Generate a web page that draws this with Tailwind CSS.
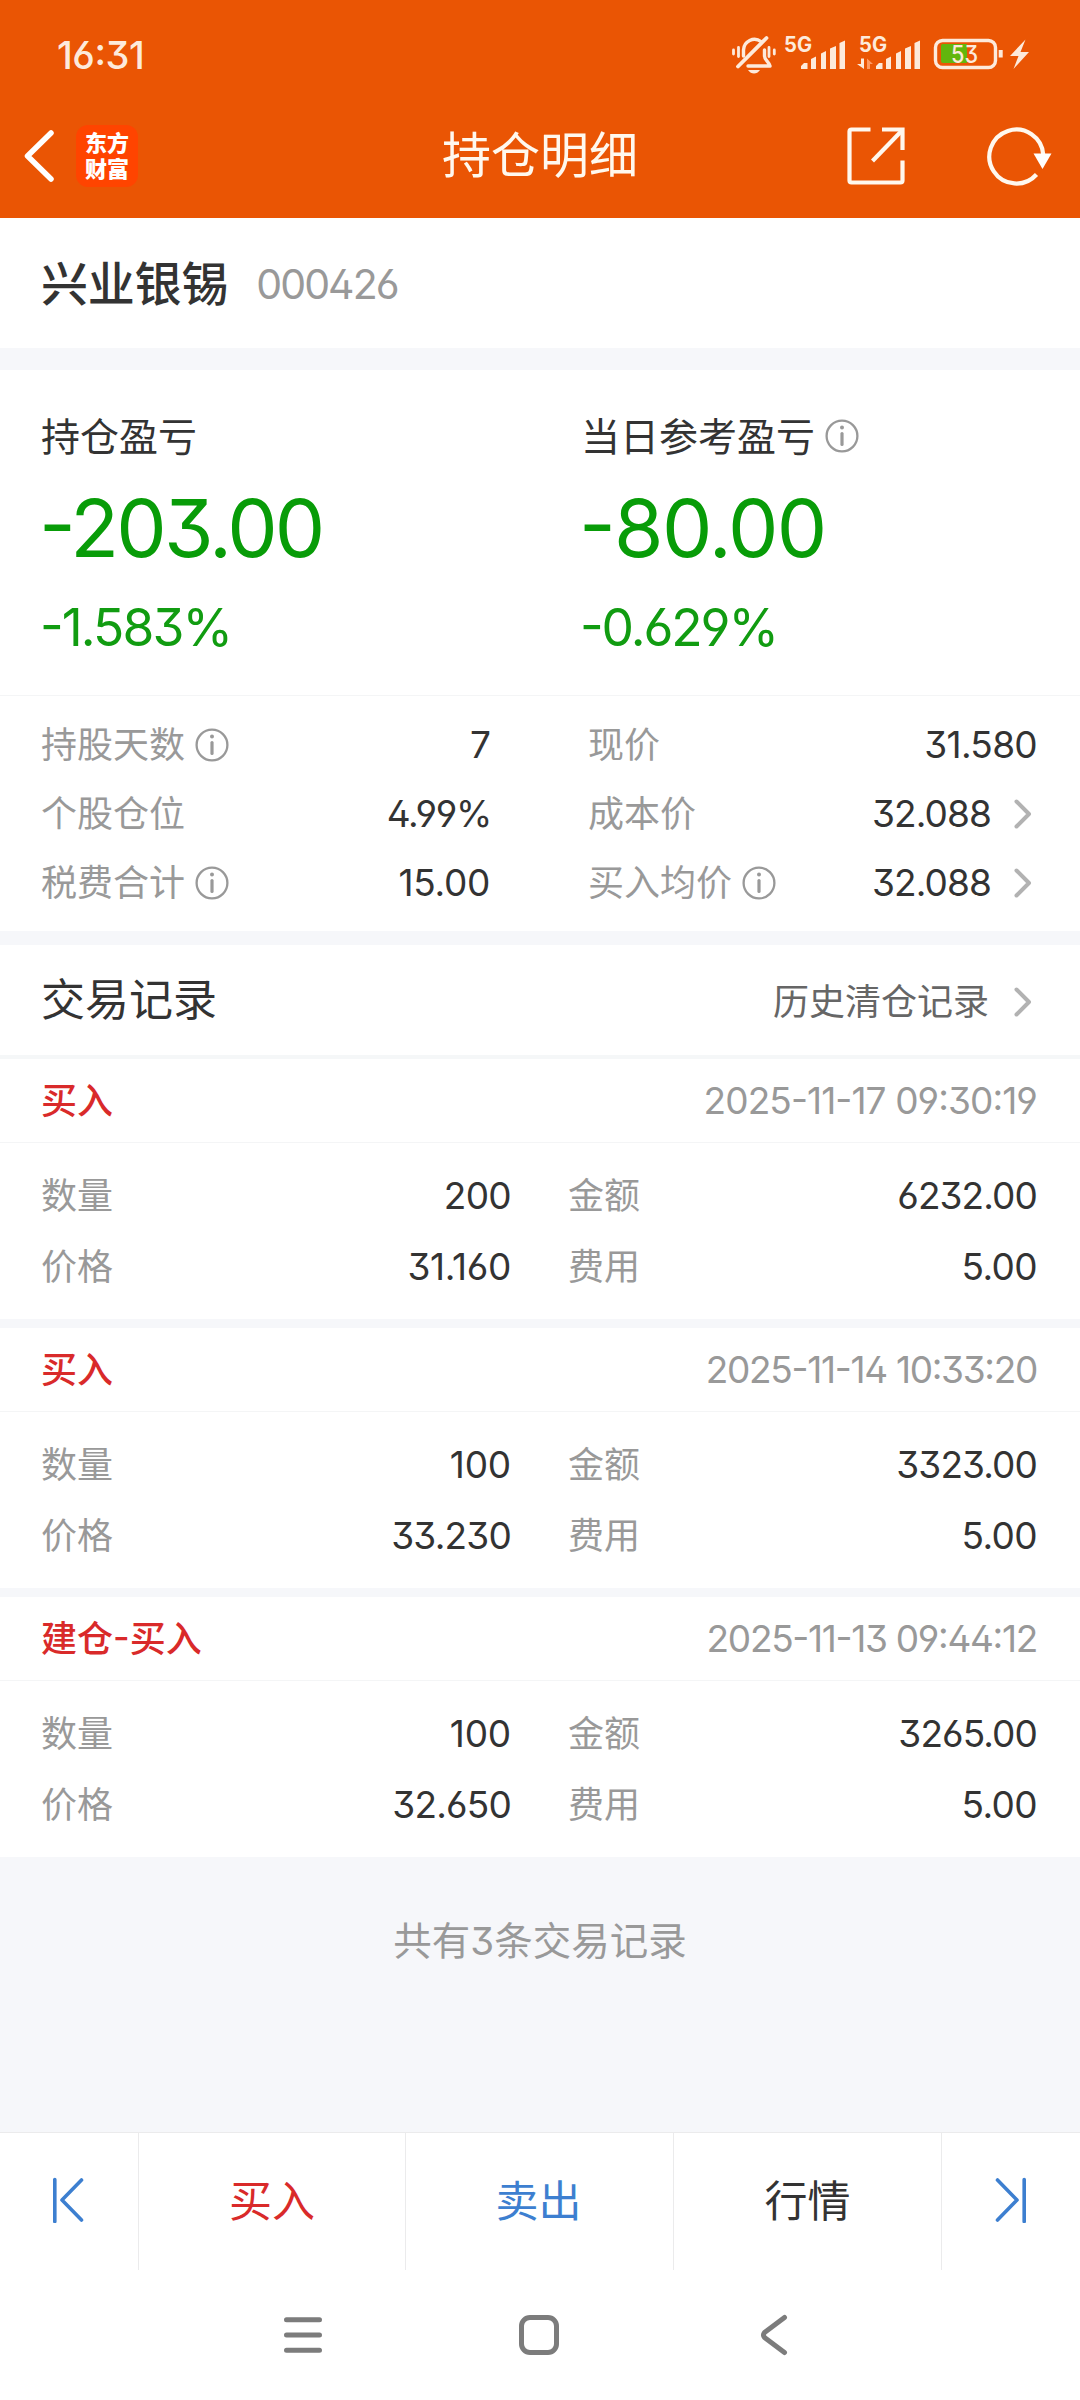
<!DOCTYPE html>
<html lang="zh-CN">
<head>
<meta charset="utf-8">
<meta name="viewport" content="width=1080">
<title>持仓明细</title>
<script src="https://cdn.jsdelivr.net/npm/@tailwindcss/browser@4"></script>
</head>
<body class="bg-[#f6f7fa]">
<div class="flex h-[2400px] w-[1080px] flex-col overflow-hidden bg-[#f6f7fa] font-[Inter,'Noto_Sans_CJK_SC',sans-serif] text-[36px] leading-none text-[#333] [font-feature-settings:'ss01','cv09','case']">

  <!-- Header -->
  <header class="h-[218px] shrink-0 bg-[#ea5504] text-[#fff8ee]">
    <div class="flex h-[108px] items-center pl-[57px] pr-[50px] text-[#fdeadb]">
      <span class="pt-px text-[38px] font-[500] tracking-[-0.4px]">16:31</span>
      <svg class="ml-auto h-[50px] w-[300px]" viewBox="730 29 300 50" fill="none" stroke="currentColor">
        <g stroke-width="3.4" stroke-linecap="round" stroke-linejoin="round">
          <path d="M743.5 56V50A11 11 0 0 1 761 41.5M764.5 50v6c0 4 4 5 5.500 10H748" />
          <path d="M738 66.500 L766.500 38" stroke-width="3.800"/>
          <path d="M733.500 50v4M738.500 47.500v9M769 47.500v9M774.300 50v4" stroke-width="2.800"/>
        </g>
        <path d="M748 70h12q-2.500 3.500-6 3.500t-6-3.500z" fill="currentColor" stroke="none"/>
        <g fill="currentColor" stroke="none">
          <text class="font-bold" x="784" y="52" font-size="21" textLength="28" lengthAdjust="spacingAndGlyphs">5G</text>
          <path d="M801 69v-3l3-3h3.500v6zM811 69V59l5-2.500V69zM821 69V53.500l5-2.500V69zM830 69V48.500l6-2.500V69zM839.500 69V43l5.500-2.500V69z"/>
          <text class="font-bold" x="859" y="52" font-size="21" textLength="28" lengthAdjust="spacingAndGlyphs">5G</text>
          <path d="M876 69v-3l3-3h3.500v6zM886 69V59l5-2.500V69zM896 69V53.500l5-2.500V69zM905 69V48.500l6-2.500V69zM914.500 69V43l5.500-2.500V69z"/>
          <path d="M861 58.500h3V69l-7-5h4z"/>
          <path d="M867 69V58.500l6 5.500h-3v5z" fill="#ff9a62"/>
        </g>
        <rect x="935.500" y="40.500" width="60" height="27" rx="7" stroke-width="3.400"/>
        <path d="M1000.700 50v7.500" stroke-width="4"/>
        <path d="M943 44h24v19h-24q-2 0-2-2V46q0-2 2-2z" fill="#62b60d" stroke="none"/>
        <text class="font-medium" x="951" y="63" font-size="24" textLength="27" lengthAdjust="spacingAndGlyphs" fill="currentColor" stroke="none">53</text>
        <path d="M1025.500 39.500 1010 56h8.500L1013.500 69 1029 52h-8.500z" fill="currentColor" stroke="none"/>
      </svg>
    </div>
    <div class="grid h-[95px] grid-cols-3 items-center">
      <div class="flex items-center gap-[20px] pl-[24px]">
        <svg class="h-[52px] w-[32px]" viewBox="0 0 32 52" fill="none" stroke="#fff" stroke-width="5.500" stroke-linecap="round" stroke-linejoin="round"><path d="M27 3 3.500 26 27 49"/></svg>
        <div class="grid size-[62px] place-content-center rounded-[12px] bg-[#ff4400] text-center text-[22px] leading-[26px] font-black text-white">东方<br>财富</div>
      </div>
      <h1 class="text-center text-[49px] font-normal whitespace-nowrap">持仓明细</h1>
      <div class="flex items-center justify-end gap-[79px] pr-[27px]">
        <svg class="h-[60px] w-[60px]" viewBox="0 0 60 60" fill="none" stroke="currentColor" stroke-width="4.200" stroke-linejoin="round"><path d="M24.500 3.500H5.500q-2 0-2 2v49q0 2 2 2h49q2 0 2-2V34.500"/><path d="M36 3.500h20.500V24" stroke-linejoin="miter"/><path d="M26.500 35 56 4.500"/></svg>
        <svg class="h-[60px] w-[68px]" viewBox="1 0 68 60" fill="none" stroke="currentColor" stroke-width="4.200"><path d="M52.500 48.500A27 27 0 1 1 59.300 29"/><path d="M49.500 27.500h18L58.500 43z" fill="#fff" stroke="none"/></svg>
      </div>
    </div>
  </header>

  <!-- Stock -->
  <section class="flex h-[130px] shrink-0 items-center gap-[28px] bg-white px-[41px]">
    <span class="text-[47px] font-[450] tracking-[-0.200px]">兴业银锡</span>
    <span class="pt-[2px] text-[41px] tracking-[-1.900px] text-[#999]">000426</span>
  </section>

  <!-- Profit and loss -->
  <section class="mt-[22px] grid h-[325px] shrink-0 grid-cols-2 bg-white px-[41px] pt-[40px]">
    <div>
      <div class="flex h-[52px] items-center text-[39px]">持仓盈亏</div>
      <div class="mt-[26px] flex h-[80px] items-center text-[80px] tracking-[-2.800px] text-[#089c08] -ml-[2px]">-203.00</div>
      <div class="mt-[34px] flex h-[52px] items-center text-[51.500px] tracking-[-1.900px] text-[#119c11] -ml-px">-1.583%</div>
    </div>
    <div class="pl-[41px]">
      <div class="flex h-[52px] items-center gap-[10px] text-[39px]">当日参考盈亏
        <svg class="size-[34px] text-[#999]" viewBox="0 0 34 34" fill="none" stroke="currentColor"><circle cx="17" cy="17" r="15.400" stroke-width="2.300"/><circle cx="17" cy="8.500" r="2" fill="currentColor" stroke="none"/><path d="M17 14.500v11" stroke-width="3.200" stroke-linecap="round"/></svg>
      </div>
      <div class="mt-[26px] flex h-[80px] items-center text-[80px] tracking-[-1.700px] text-[#089c08] -ml-[2px]">-80.00</div>
      <div class="mt-[34px] flex h-[52px] items-center text-[51.500px] tracking-[-2.100px] text-[#119c11] -ml-px">-0.629%</div>
    </div>
  </section>

  <!-- Position figures -->
  <section class="grid h-[236px] shrink-0 grid-cols-[450px_449px] justify-between border-t border-[#f4f5f6] bg-white pr-[43px] pl-[41px] pt-[14px]">
    <div>
      <div class="flex h-[69px] items-center gap-[10px] text-[#999]"><span>持股天数</span>
        <svg class="size-[34px]" viewBox="0 0 34 34" fill="none" stroke="currentColor"><circle cx="17" cy="17" r="15.400" stroke-width="2.300"/><circle cx="17" cy="8.500" r="2" fill="currentColor" stroke="none"/><path d="M17 14.500v11" stroke-width="3.200" stroke-linecap="round"/></svg>
        <span class="ml-auto text-[37px] text-[#333]">7</span></div>
      <div class="flex h-[69px] items-center gap-[10px] text-[#999]"><span>个股仓位</span><span class="ml-auto text-[37px] tracking-[-1.300px] text-[#333]">4.99%</span></div>
      <div class="flex h-[69px] items-center gap-[10px] text-[#999]"><span>税费合计</span>
        <svg class="size-[34px]" viewBox="0 0 34 34" fill="none" stroke="currentColor"><circle cx="17" cy="17" r="15.400" stroke-width="2.300"/><circle cx="17" cy="8.500" r="2" fill="currentColor" stroke="none"/><path d="M17 14.500v11" stroke-width="3.200" stroke-linecap="round"/></svg>
        <span class="ml-auto pr-px text-[37px] tracking-[-0.300px] text-[#333]">15.00</span></div>
    </div>
    <div>
      <div class="flex h-[69px] items-center text-[#999]"><span>现价</span><span class="ml-auto text-[37px] tracking-[-0.700px] text-[#333]">31.580</span></div>
      <div class="flex h-[69px] items-center text-[#999]"><span>成本价</span><span class="ml-auto text-[37px] tracking-[-0.900px] text-[#333]">32.088</span>
        <svg class="mr-[4px] ml-[22px] h-[32px] w-[20px]" viewBox="0 0 20 32" fill="none" stroke="#b2b2b2" stroke-width="4" stroke-linecap="round" stroke-linejoin="round"><path d="M3.500 3.500 16 16 3.500 28.500"/></svg></div>
      <div class="flex h-[69px] items-center text-[#999]"><span>买入均价</span>
        <svg class="ml-[10px] size-[34px]" viewBox="0 0 34 34" fill="none" stroke="currentColor"><circle cx="17" cy="17" r="15.400" stroke-width="2.300"/><circle cx="17" cy="8.500" r="2" fill="currentColor" stroke="none"/><path d="M17 14.500v11" stroke-width="3.200" stroke-linecap="round"/></svg>
        <span class="ml-auto text-[37px] tracking-[-0.900px] text-[#333]">32.088</span>
        <svg class="mr-[4px] ml-[22px] h-[32px] w-[20px]" viewBox="0 0 20 32" fill="none" stroke="#b2b2b2" stroke-width="4" stroke-linecap="round" stroke-linejoin="round"><path d="M3.500 3.500 16 16 3.500 28.500"/></svg></div>
    </div>
  </section>

  <!-- Trade records -->
  <section class="mt-[14px] flex h-[114px] shrink-0 items-center border-b-4 border-[#f5f7f8] bg-white pr-[43px] pl-[41px]">
    <h2 class="text-[44px] font-normal">交易记录</h2>
    <span class="mt-[4px] ml-auto text-[#666]">历史清仓记录</span>
    <svg class="mt-[4px] mr-[4px] ml-[24px] h-[32px] w-[20px]" viewBox="0 0 20 32" fill="none" stroke="#b2b2b2" stroke-width="4" stroke-linecap="round" stroke-linejoin="round"><path d="M3.500 3.500 16 16 3.500 28.500"/></svg>
  </section>

  <article class="h-[260px] shrink-0 bg-white">
    <div class="flex h-[84px] items-center justify-between border-b border-[#f4f5f6] pr-[43px] pl-[41px]">
      <span class="font-medium text-[#d92a2a]">买入</span>
      <time class="text-[37px] tracking-[-0.900px] text-[#999]">2025-11-17 09:30:19</time>
    </div>
    <div class="grid grid-cols-[470px_469px] grid-rows-[71px_71px] items-center justify-between pt-[17px] pr-[43px] pl-[41px]">
      <div class="flex items-center justify-between"><span class="text-[#999]">数量</span><span class="text-[37px] tracking-[-0.700px]">200</span></div>
      <div class="flex items-center justify-between"><span class="text-[#999]">金额</span><span class="text-[37px] tracking-[-0.900px]">6232.00</span></div>
      <div class="flex items-center justify-between"><span class="text-[#999]">价格</span><span class="text-[37px] tracking-[-0.300px]">31.160</span></div>
      <div class="flex items-center justify-between"><span class="text-[#999]">费用</span><span class="text-[37px] tracking-[-0.600px]">5.00</span></div>
    </div>
  </article>

  <article class="mt-[9px] h-[260px] shrink-0 bg-white">
    <div class="flex h-[84px] items-center justify-between border-b border-[#f4f5f6] pr-[43px] pl-[41px]">
      <span class="font-medium text-[#d92a2a]">买入</span>
      <time class="text-[37px] tracking-[-1.300px] text-[#999]">2025-11-14 10:33:20</time>
    </div>
    <div class="grid grid-cols-[470px_469px] grid-rows-[71px_71px] items-center justify-between pt-[17px] pr-[43px] pl-[41px]">
      <div class="flex items-center justify-between"><span class="text-[#999]">数量</span><span class="text-[37px] tracking-[-0.200px]">100</span></div>
      <div class="flex items-center justify-between"><span class="text-[#999]">金额</span><span class="text-[37px] tracking-[-0.900px]">3323.00</span></div>
      <div class="flex items-center justify-between"><span class="text-[#999]">价格</span><span class="text-[37px] tracking-[-0.800px]">33.230</span></div>
      <div class="flex items-center justify-between"><span class="text-[#999]">费用</span><span class="text-[37px] tracking-[-0.600px]">5.00</span></div>
    </div>
  </article>

  <article class="mt-[9px] h-[260px] shrink-0 bg-white">
    <div class="flex h-[84px] items-center justify-between border-b border-[#f4f5f6] pr-[43px] pl-[41px]">
      <span class="font-medium text-[#d92a2a]">建仓-买入</span>
      <time class="text-[37px] tracking-[-1.300px] text-[#999]">2025-11-13 09:44:12</time>
    </div>
    <div class="grid grid-cols-[470px_469px] grid-rows-[71px_71px] items-center justify-between pt-[17px] pr-[43px] pl-[41px]">
      <div class="flex items-center justify-between"><span class="text-[#999]">数量</span><span class="text-[37px] tracking-[-0.200px]">100</span></div>
      <div class="flex items-center justify-between"><span class="text-[#999]">金额</span><span class="text-[37px] tracking-[-0.900px]">3265.00</span></div>
      <div class="flex items-center justify-between"><span class="text-[#999]">价格</span><span class="text-[37px] tracking-[-0.800px]">32.650</span></div>
      <div class="flex items-center justify-between"><span class="text-[#999]">费用</span><span class="text-[37px] tracking-[-0.600px]">5.00</span></div>
    </div>
  </article>

  <p class="flex h-[168px] shrink-0 items-center justify-center text-[38.500px] text-[#999]">共有3条交易记录</p>

  <!-- Action bar -->
  <nav class="mt-auto grid h-[138px] shrink-0 grid-cols-[139px_267px_268px_268px_138px] border-t border-[#ebebec] bg-white text-[43px]">
    <div class="grid place-content-center border-r border-[#ebebec] pb-[4px]">
      <svg class="h-[46px] w-[34px]" viewBox="53 2177 34 46" fill="none" stroke="#3d7fd0" stroke-width="3.600" stroke-linecap="round" stroke-linejoin="round"><path d="M55.800 2179.500v42M82.500 2180 63 2200l19.500 20"/></svg>
    </div>
    <div class="grid place-content-center border-r border-[#ebebec] text-[#d92a2a]">买入</div>
    <div class="grid place-content-center border-r border-[#ebebec] pr-[2px] text-[#3d7fd0]">卖出</div>
    <div class="grid place-content-center border-r border-[#ebebec]">行情</div>
    <div class="grid place-content-center pb-[4px]">
      <svg class="h-[46px] w-[34px]" viewBox="994 2177 34 46" fill="none" stroke="#3d7fd0" stroke-width="3.600" stroke-linecap="round" stroke-linejoin="round"><path d="M1024.200 2179.500v42M997.500 2180l19.500 20-19.500 20"/></svg>
    </div>
  </nav>

  <!-- System navigation -->
  <div class="flex h-[130px] shrink-0 items-center justify-center gap-[194px] bg-white pr-[2px] text-[#7c7c7c]">
    <svg class="h-[42px] w-[42px]" viewBox="0 0 42 42" fill="none" stroke="currentColor" stroke-width="5" stroke-linecap="round"><path d="M4.500 5.700h33M4.500 21h33M4.500 36.300h33"/></svg>
    <svg class="h-[42px] w-[42px]" viewBox="0 0 42 42" fill="none" stroke="currentColor" stroke-width="5"><rect x="3.500" y="3.500" width="35" height="35" rx="8.500"/></svg>
    <svg class="h-[42px] w-[42px]" viewBox="0 0 42 42" fill="none" stroke="currentColor" stroke-width="5" stroke-linecap="round" stroke-linejoin="round"><path d="M30.500 3.500 10.500 18.500Q8.500 21 10.500 23.500L30.500 38.500"/></svg>
  </div>
</div>
</body>
</html>
